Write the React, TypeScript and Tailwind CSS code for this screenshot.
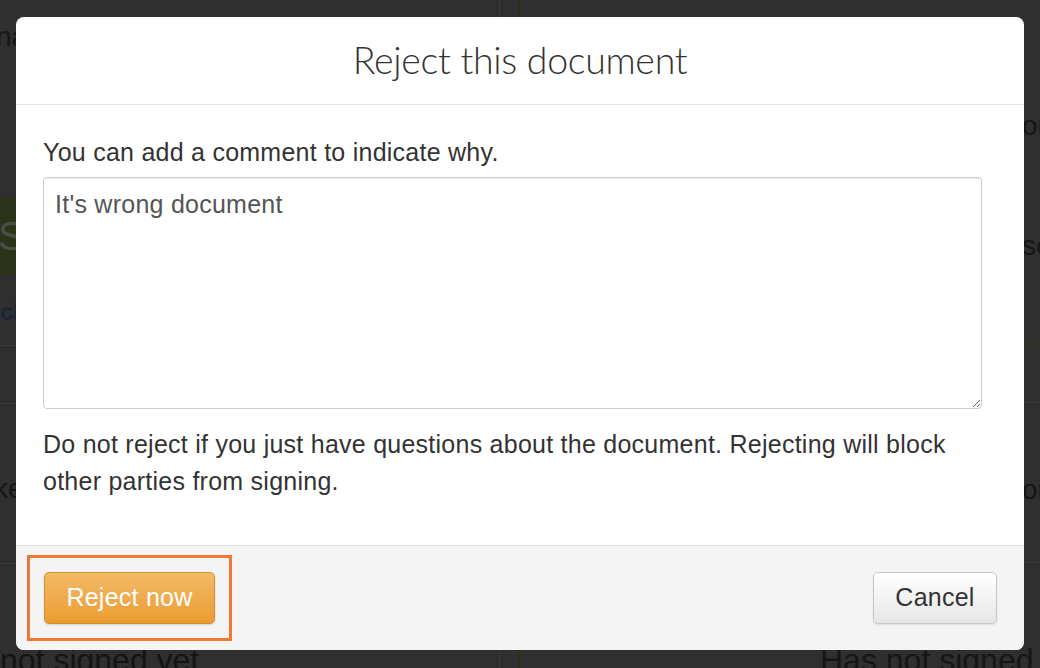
import React from 'react';

// Faded page behind the modal backdrop
function BackdropPage() {
  return (
    <div className="grid h-[668px] w-[1040px] grid-cols-[500px_1fr] gap-[18px] overflow-hidden bg-[#2f2f2f] font-['Liberation_Sans',Arial,sans-serif] text-[#161616]">
      {/* Left column */}
      <div className="flex flex-col border-r border-[#3a3a3a]">
        <div className="h-[180px] pt-[22px] text-[28px] leading-[30px]">
          <span className="-ml-[4px]">name</span>
        </div>
        <div className="h-[96px] pt-[17px]">
          <div className="flex h-[78px] w-[200px] items-center bg-[#2c3318] text-[40px] text-[#4a4f45]">
            <span className="-ml-[2px]">Sign</span>
          </div>
        </div>
        <div className="h-[70px] border-b border-[#3a3a3a] pt-[18px] text-[24px] font-bold text-[#17263a]">
          change
        </div>
        <div className="h-[58px] border-b border-[#383838]" />
        <div className="h-[160px] border-b border-[#383838] pt-[64px] text-[28px]">
          <span className="-ml-[6px]">ked</span>
        </div>
        <div className="pt-[80px] text-[32px] leading-[32px] text-[#141414]">
          not signed yet
        </div>
      </div>
      {/* Right column */}
      <div className="flex flex-col border-l-2 border-[#2a3214]">
        <div className="h-[345px] border-b-2 border-[#2f3a14]">
          <div className="pl-[502px] pt-[105px] text-[28px]">on</div>
          <div className="pl-[502px] pt-[78px] text-[28px]">sed</div>
        </div>
        <div className="h-[58px] border-b border-[#383838]" />
        <div className="h-[160px] border-b border-[#383838] pl-[502px] pt-[66px] text-[28px]">on</div>
        <div className="pl-[300px] pt-[81px] text-[32px] leading-[32px]">Has not signed</div>
      </div>
    </div>
  );
}

export default function App() {
  return (
    <div className="relative h-[668px] w-[1040px] overflow-hidden">
      <BackdropPage />

      {/* Reject modal */}
      <div className="absolute left-[16px] top-[17px] flex h-[633px] w-[1008px] flex-col overflow-hidden rounded-[8px] bg-white font-['Liberation_Sans',Arial,sans-serif] text-[#333]">
        {/* Header */}
        <div className="flex h-[88px] shrink-0 items-center justify-center border-b border-[#e5e5e5]">
          <h1 className="font-['Lato',sans-serif] text-[37.5px] font-light tracking-[-0.3px] text-[#333]">
            Reject this document
          </h1>
        </div>

        {/* Body */}
        <div className="flex flex-1 flex-col px-[27px] pt-[32px] text-[25px] tracking-[0.25px]">
          <p className="leading-[30px]">You can add a comment to indicate why.</p>
          <textarea
            defaultValue="It's wrong document"
            className="mt-[10px] h-[232px] w-[939px] resize-y rounded-[4px] border border-[#cccccc] px-[11px] py-[8px] leading-[36px] text-[#555] shadow-[inset_0_1px_1px_rgba(0,0,0,0.075)] outline-none"
          />
          <p className="mt-[17px] leading-[37px]">
            Do not reject if you just have questions about the document. Rejecting will block other parties from signing.
          </p>
        </div>

        {/* Footer */}
        <div className="flex h-[105px] shrink-0 items-center justify-between border-t border-[#e0e0e0] bg-[#f4f4f4] pl-[11px] pr-[27px] text-[25px] tracking-[0.25px]">
          <div className="border-[3px] border-[#f07832] px-[14px] py-[14px]">
            <button className="h-[52px] w-[171px] rounded-[5px] border border-[#d58f2c] bg-gradient-to-b from-[#f3b965] to-[#eb9c30] text-white shadow-[0_1px_2px_rgba(0,0,0,0.15)]">
              Reject now
            </button>
          </div>
          <button className="h-[52px] w-[124px] rounded-[5px] border border-[#c8c8c8] bg-gradient-to-b from-white to-[#e6e6e6] text-[#333] shadow-[0_1px_2px_rgba(0,0,0,0.1)]">
            Cancel
          </button>
        </div>
      </div>
    </div>
  );
}
